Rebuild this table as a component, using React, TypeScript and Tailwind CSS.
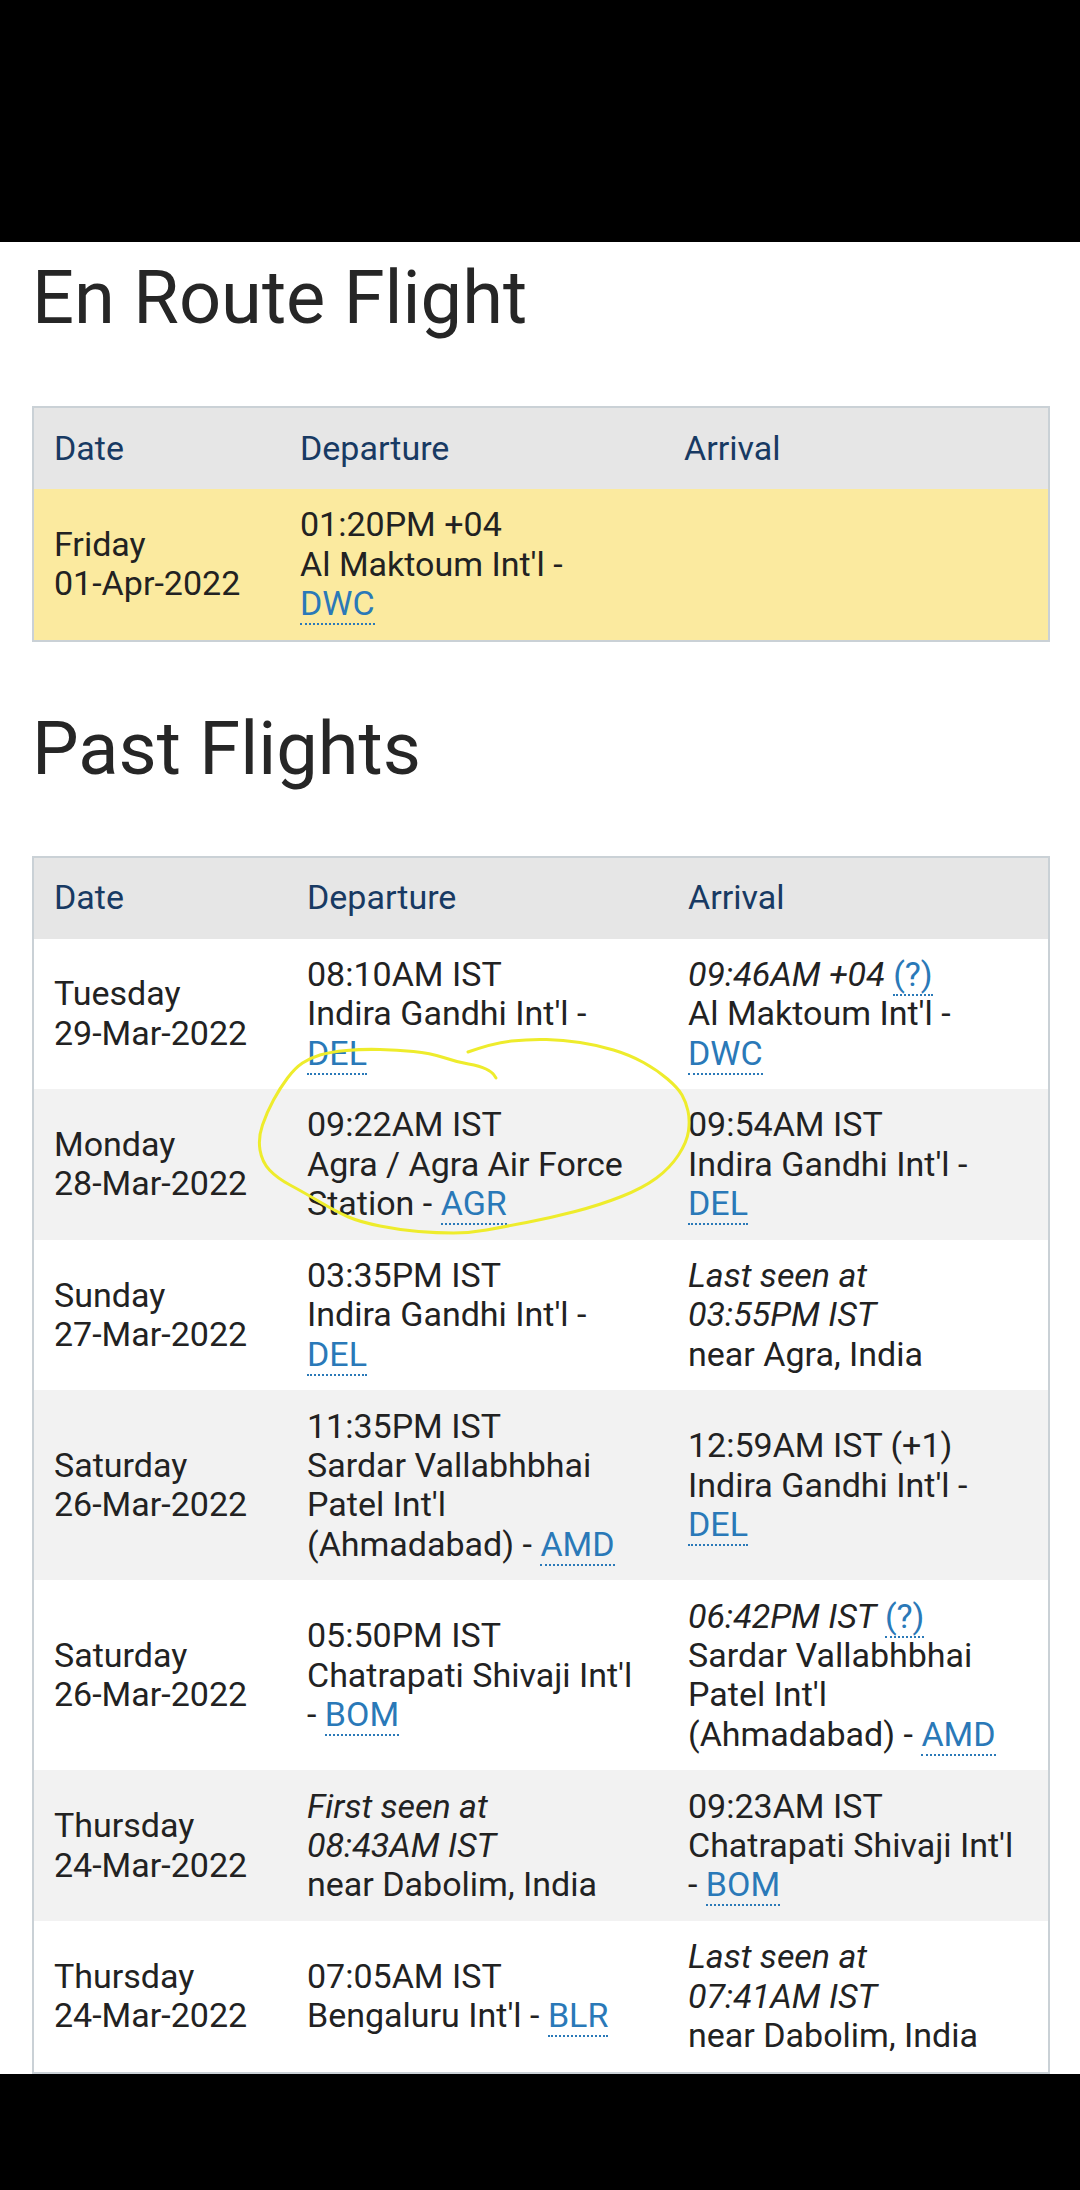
import React from "react";

type Cell = React.ReactNode;

const L = ({ children }: { children: React.ReactNode }) => (
  <span className="text-[#2a79b8] border-b-2 border-dotted border-[#2a79b8]">{children}</span>
);

const I = ({ children }: { children: React.ReactNode }) => <span className="italic">{children}</span>;

const pastRows: [Cell, Cell, Cell][] = [
  [
    <>Tuesday<br />29-Mar-2022</>,
    <>08:10AM IST<br />Indira Gandhi Int'l - <L>DEL</L></>,
    <><I>09:46AM +04</I> <L>(?)</L><br />Al Maktoum Int'l - <L>DWC</L></>,
  ],
  [
    <>Monday<br />28-Mar-2022</>,
    <>09:22AM IST<br />Agra / Agra Air Force Station - <L>AGR</L></>,
    <>09:54AM IST<br />Indira Gandhi Int'l - <L>DEL</L></>,
  ],
  [
    <>Sunday<br />27-Mar-2022</>,
    <>03:35PM IST<br />Indira Gandhi Int'l - <L>DEL</L></>,
    <><I>Last seen at<br />03:55PM IST</I><br />near Agra, India</>,
  ],
  [
    <>Saturday<br />26-Mar-2022</>,
    <>11:35PM IST<br />Sardar Vallabhbhai Patel Int'l (Ahmadabad) - <L>AMD</L></>,
    <>12:59AM IST (+1)<br />Indira Gandhi Int'l - <L>DEL</L></>,
  ],
  [
    <>Saturday<br />26-Mar-2022</>,
    <>05:50PM IST<br />Chatrapati Shivaji Int'l - <L>BOM</L></>,
    <><I>06:42PM IST</I> <L>(?)</L><br />Sardar Vallabhbhai Patel Int'l (Ahmadabad) - <L>AMD</L></>,
  ],
  [
    <>Thursday<br />24-Mar-2022</>,
    <><I>First seen at<br />08:43AM IST</I><br />near Dabolim, India</>,
    <>09:23AM IST<br />Chatrapati Shivaji Int'l - <L>BOM</L></>,
  ],
  [
    <>Thursday<br />24-Mar-2022</>,
    <>07:05AM IST<br />Bengaluru Int'l - <L>BLR</L></>,
    <><I>Last seen at<br />07:41AM IST</I><br />near Dabolim, India</>,
  ],
];

const td = "align-middle pl-[20px] pr-[28px] py-[16.2px] text-[34px] leading-[39.4px] text-[#222222] font-normal text-left";
const th = "align-middle pl-[20px] pr-[28px] py-[20.8px] text-[34px] leading-[39.4px] text-[#183a63] font-normal text-left";

function FlightTable({
  widths,
  rows,
  rowBg,
}: {
  widths: [string, string, string];
  rows: [Cell, Cell, Cell][];
  rowBg: (i: number) => string;
}) {
  return (
    <table className="w-full table-fixed border-separate border-spacing-0 border-2 border-[#cad1d6]">
      <colgroup>
        <col className={widths[0]} />
        <col className={widths[1]} />
        <col className={widths[2]} />
      </colgroup>
      <thead>
        <tr className="bg-[#e6e6e6]">
          <th className={th}>Date</th>
          <th className={th}>Departure</th>
          <th className={th}>Arrival</th>
        </tr>
      </thead>
      <tbody>
        {rows.map((r, i) => (
          <tr key={i} className={rowBg(i)}>
            <td className={td}>{r[0]}</td>
            <td className={td}>{r[1]}</td>
            <td className={td}>{r[2]}</td>
          </tr>
        ))}
      </tbody>
    </table>
  );
}

const loopPts: [number, number][] = [
  [468, 1052], [493, 1043], [530, 1039], [563, 1040], [597, 1045], [630, 1055], [657, 1070],
  [678, 1088], [686, 1102], [690, 1120], [687, 1142], [670, 1168], [643, 1188], [600, 1205],
  [550, 1218], [503, 1227], [470, 1233], [437, 1233], [400, 1230], [360, 1222], [337, 1212],
  [303, 1192], [277, 1178], [262, 1162], [258, 1138], [267, 1112], [280, 1088], [295, 1068],
  [310, 1058], [330, 1052], [363, 1049], [397, 1050], [430, 1053], [457, 1062], [480, 1066],
  [492, 1072], [496, 1078],
];

function smoothPath(pts: [number, number][]) {
  let d = `M${pts[0][0]} ${pts[0][1]}`;
  for (let i = 1; i < pts.length - 1; i++) {
    const mx = (pts[i][0] + pts[i + 1][0]) / 2;
    const my = (pts[i][1] + pts[i + 1][1]) / 2;
    d += ` Q${pts[i][0]} ${pts[i][1]} ${mx} ${my}`;
  }
  const last = pts[pts.length - 1];
  d += ` L${last[0]} ${last[1]}`;
  return d;
}

export default function App() {
  return (
    <div className="relative w-[1080px] h-[2190px] flex flex-col bg-black overflow-hidden font-[Roboto,sans-serif]">
      <div className="h-[242px] shrink-0 bg-black" />
      <div className="flex-1 overflow-hidden bg-white pl-[32px] pr-[30px] pt-[14px]">
        <h2 className="text-[74px] leading-[84px] font-normal text-[#262626]">En Route Flight</h2>
        <div className="mt-[66px]">
          <FlightTable
            widths={["w-[246px]", "w-[384px]", "w-[384px]"]}
            rows={[
              [
                <>Friday<br />01-Apr-2022</>,
                <>01:20PM +04<br />Al Maktoum Int'l - <L>DWC</L></>,
                <></>,
              ],
            ]}
            rowBg={() => "bg-[#fbea9f]"}
          />
        </div>
        <h2 className="mt-[65px] text-[74px] leading-[84px] font-normal text-[#262626]">Past Flights</h2>
        <div className="mt-[65px]">
          <FlightTable
            widths={["w-[253px]", "w-[381px]", "w-[380px]"]}
            rows={pastRows}
            rowBg={(i) => (i % 2 === 0 ? "bg-white" : "bg-[#f2f2f2]")}
          />
        </div>
      </div>
      <div className="h-[116px] shrink-0 bg-black" />
      <svg
        className="absolute top-0 left-0 pointer-events-none"
        width="1080"
        height="2190"
        viewBox="0 0 1080 2190"
      >
        <path
          d={smoothPath(loopPts)}
          fill="none"
          stroke="#eeec2c"
          strokeWidth="3"
          strokeLinecap="round"
          strokeLinejoin="round"
        />
      </svg>
    </div>
  );
}
